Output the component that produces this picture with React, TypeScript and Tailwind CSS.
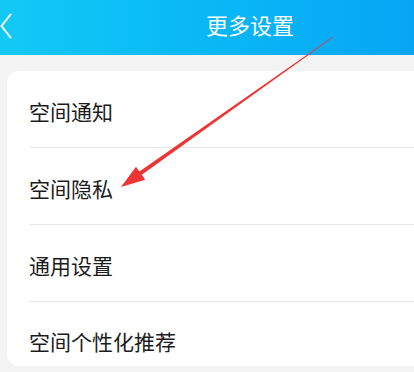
import React from 'react';

const items = ['空间通知', '空间隐私', '通用设置', '空间个性化推荐'];

const App: React.FC = () => {
  return (
    <div
      className="relative w-[414px] h-[372px] overflow-hidden bg-[#f3f3f3]"
      style={{ fontFamily: '"Noto Sans CJK SC", "Noto Sans", sans-serif' }}
    >
      {/* header */}
      <div className="flex items-center h-[55px] pb-[8px] bg-gradient-to-r from-[#12c9f6] to-[#07a6f5]">
        <svg width="12" height="26" viewBox="0 0 12 26" className="shrink-0 mt-[4px]">
          <path d="M10.5 1.5 L1.5 13 L10.5 24.5" fill="none" stroke="#ffffff" strokeWidth="2" strokeLinecap="round" strokeLinejoin="round" />
        </svg>
        <span className="ml-[194px] text-[22px] leading-[28px] text-white">更多设置</span>
      </div>

      {/* card */}
      <div className="mt-[16px] ml-[7px] -mr-[20px] bg-white rounded-[12px]">
        {items.map((item, i) => (
          <div key={item} className="pl-[22px]">
            <div
              className={
                i === items.length - 1
                  ? 'h-[64px] pt-[25px] text-[21px] leading-[28px] text-[#1c1c1c]'
                  : 'h-[77px] pt-[26px] border-b border-[#e9e9e9] text-[21px] leading-[28px] text-[#1c1c1c]'
              }
            >
              {item}
            </div>
          </div>
        ))}
      </div>

      {/* red arrow annotation */}
      <svg className="absolute inset-0 pointer-events-none" width="414" height="372" viewBox="0 0 414 372">
        <polygon
          points="333.2,37.2 332.8,36.8 139.4,171.6 136,166.7 121,187 145.2,179.7 141.8,174.8"
          fill="#ee3535"
        />
      </svg>
    </div>
  );
};

export default App;
